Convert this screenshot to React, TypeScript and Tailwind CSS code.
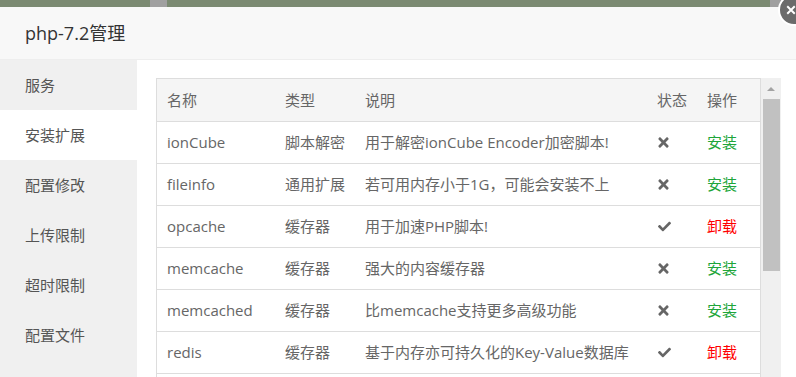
const rows = [
  { name: "ionCube", type: "脚本解密", desc: "用于解密ionCube Encoder加密脚本!", on: false },
  { name: "fileinfo", type: "通用扩展", desc: "若可用内存小于1G，可能会安装不上", on: false },
  { name: "opcache", type: "缓存器", desc: "用于加速PHP脚本!", on: true },
  { name: "memcache", type: "缓存器", desc: "强大的内容缓存器", on: false },
  { name: "memcached", type: "缓存器", desc: "比memcache支持更多高级功能", on: false },
  { name: "redis", type: "缓存器", desc: "基于内存亦可持久化的Key-Value数据库", on: true },
];

const menu = ["服务", "安装扩展", "配置修改", "上传限制", "超时限制", "配置文件"];

const TimesIcon = () => (
  <svg viewBox="0 0 352 512" className="w-[11px] h-[15px] fill-[#666]">
    <path d="M242.72 256l100.07-100.07c12.28-12.28 12.28-32.19 0-44.48l-22.24-22.24c-12.28-12.28-32.19-12.28-44.48 0L176 189.28 75.93 89.21c-12.28-12.28-32.19-12.28-44.48 0L9.21 111.45c-12.28 12.28-12.28 32.19 0 44.48L109.28 256 9.21 356.07c-12.28 12.28-12.28 32.19 0 44.48l22.24 22.24c12.28 12.28 32.2 12.28 44.48 0L176 322.72l100.07 100.07c12.28 12.28 32.2 12.28 44.48 0l22.24-22.24c12.28-12.28 12.28-32.19 0-44.48L242.72 256z" />
  </svg>
);

const CheckIcon = () => (
  <svg viewBox="0 0 512 512" className="w-[13px] h-[13px] fill-[#666]">
    <path d="M173.898 439.404l-166.4-166.4c-9.997-9.997-9.997-26.206 0-36.204l36.203-36.204c9.997-9.998 26.207-9.998 36.204 0L192 312.69 432.095 72.596c9.997-9.997 26.207-9.997 36.204 0l36.203 36.204c9.997 9.997 9.997 26.206 0 36.204l-294.4 294.401c-9.998 9.997-26.207 9.997-36.204-.001z" />
  </svg>
);

const App = () => {
  return (
    <div
      className="relative w-[796px] h-[377px] overflow-hidden bg-white flex flex-col"
      style={{ fontFamily: '"Open Sans", "Noto Sans CJK SC", sans-serif' }}
    >
      {/* page behind the dialog */}
      <div className="h-[7px] shrink-0 flex bg-[#7b8a72]">
        <div className="w-[150px]" />
        <div className="w-[17px] bg-[#a0a0a0]" />
        <div className="flex-1" />
        <div className="w-[26px] bg-[#a0a0a0]" />
      </div>

      {/* header */}
      <div className="h-[53px] shrink-0 bg-[#f8f8f8] border-b border-[#eee] flex items-center pl-[25px] text-[18px] text-[#333]">
        php-7.2管理
      </div>

      <div className="flex flex-1 min-h-0">
        <div className="w-[137px] shrink-0 bg-[#f0f0f0] flex flex-col">
          {menu.map((m, i) => (
            <div
              key={m}
              className={`h-[50px] shrink-0 flex items-center pl-[25px] text-[15px] text-[#555] ${
                i === 1 ? "bg-white" : ""
              }`}
            >
              {m}
            </div>
          ))}
        </div>

        <div className="flex-1 flex pt-[18px] pl-[19px] pr-[15px]">
          <div className="flex-1 border-t border-l border-[#ddd] overflow-hidden">
            <table className="w-full border-collapse table-fixed text-[15px] text-[#666]">
              <colgroup>
                <col className="w-[118px]" />
                <col className="w-[80px]" />
                <col className="w-[292px]" />
                <col className="w-[50px]" />
                <col />
              </colgroup>
              <thead>
                <tr className="h-[42px] bg-[#f5f5f5] border-b border-[#ddd]">
                  <th className="font-normal text-left pl-[10px]">名称</th>
                  <th className="font-normal text-left pl-[10px]">类型</th>
                  <th className="font-normal text-left pl-[10px]">说明</th>
                  <th className="font-normal text-left pl-[10px]">状态</th>
                  <th className="font-normal text-left pl-[10px]">操作</th>
                </tr>
              </thead>
              <tbody>
                {rows.map((r) => (
                  <tr key={r.name} className="h-[42px] border-b border-[#ddd]">
                    <td className="pl-[10px]">{r.name}</td>
                    <td className="pl-[10px] whitespace-nowrap">{r.type}</td>
                    <td className="pl-[10px] whitespace-nowrap">{r.desc}</td>
                    <td className="pl-[11px]">
                      <div className="flex items-center">{r.on ? <CheckIcon /> : <TimesIcon />}</div>
                    </td>
                    <td className="pl-[10px]">
                      {r.on ? (
                        <span className="text-[#f00]">卸载</span>
                      ) : (
                        <span className="text-[#20a53a]">安装</span>
                      )}
                    </td>
                  </tr>
                ))}
              </tbody>
            </table>
          </div>

          {/* scrollbar */}
          <div className="w-[21px] shrink-0 bg-[#f0f0f0] border-l border-[#ddd] flex flex-col items-center">
            <div className="h-[21px] flex items-center justify-center">
              <div className="w-0 h-0 border-l-[4px] border-r-[4px] border-b-[4px] border-l-transparent border-r-transparent border-b-[#a3a3a3]" />
            </div>
            <div className="w-[17px] h-[172px] bg-[#c1c1c1]" />
          </div>
        </div>
      </div>

      {/* close button */}
      <div className="absolute left-[778px] top-[-6px] w-[32px] h-[32px] rounded-full bg-[#6b6b6b] border-2 border-white flex items-center justify-center">
        <svg viewBox="0 0 16 16" className="w-[12px] h-[12px] -ml-[6px]">
          <path d="M3 3l10 10M13 3L3 13" stroke="#fff" strokeWidth="2.6" />
        </svg>
      </div>
    </div>
  );
};

export default App;
